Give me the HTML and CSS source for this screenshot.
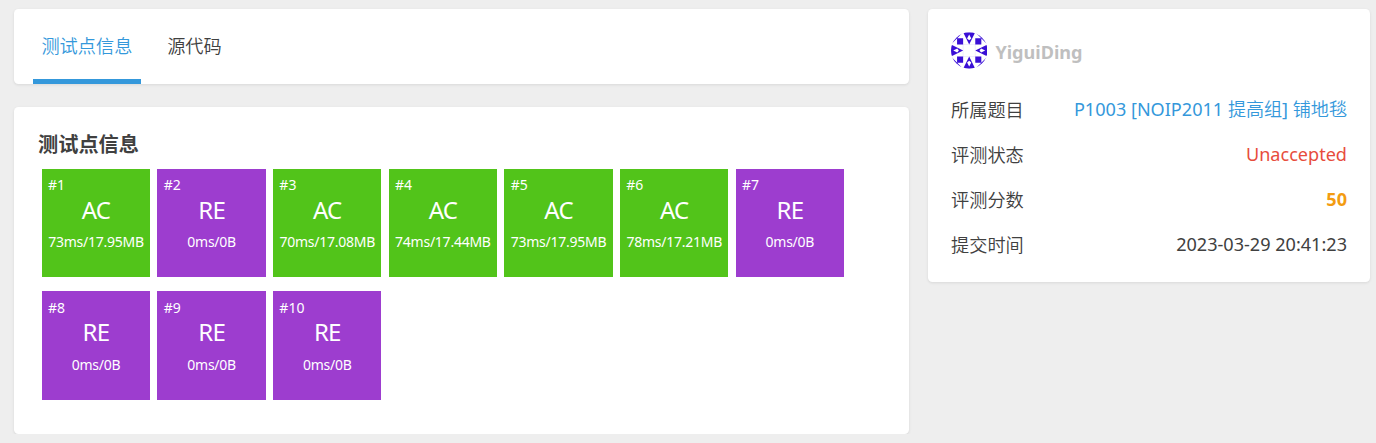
FILE: index.html
```html
<!DOCTYPE html>
<html lang="zh-CN">
<head>
<meta charset="utf-8">
<title>测试点信息</title>
<link rel="stylesheet" href="styles.css">
</head>
<body>
<main class="layout">
  <div class="main-col">
    <nav class="card tabs">
      <a class="tab active">测试点信息</a>
      <a class="tab">源代码</a>
    </nav>
    <section class="card result">
      <h3 class="title">测试点信息</h3>
      <div class="cases">
        <div class="case ac"><span class="id">#1</span><span class="status">AC</span><span class="info">73ms/17.95MB</span></div>
        <div class="case re"><span class="id">#2</span><span class="status">RE</span><span class="info">0ms/0B</span></div>
        <div class="case ac"><span class="id">#3</span><span class="status">AC</span><span class="info">70ms/17.08MB</span></div>
        <div class="case ac"><span class="id">#4</span><span class="status">AC</span><span class="info">74ms/17.44MB</span></div>
        <div class="case ac"><span class="id">#5</span><span class="status">AC</span><span class="info">73ms/17.95MB</span></div>
        <div class="case ac"><span class="id">#6</span><span class="status">AC</span><span class="info">78ms/17.21MB</span></div>
        <div class="case re"><span class="id">#7</span><span class="status">RE</span><span class="info">0ms/0B</span></div>
        <div class="case re"><span class="id">#8</span><span class="status">RE</span><span class="info">0ms/0B</span></div>
        <div class="case re"><span class="id">#9</span><span class="status">RE</span><span class="info">0ms/0B</span></div>
        <div class="case re"><span class="id">#10</span><span class="status">RE</span><span class="info">0ms/0B</span></div>
      </div>
    </section>
  </div>
  <aside class="card side">
    <div class="user">
      <svg class="avatar" viewBox="0 0 36 36">
        <defs>
          <clipPath id="round"><circle cx="18" cy="18" r="18"/></clipPath>
          <g id="quarter">
            <path d="M12 0H24L18 12ZM18 2.2L15.9 6.2L18 7.8L20.1 6.2Z" fill-rule="evenodd"/>
            <path d="M6 6H12V12H6ZM0 12L12 0H0Z"/>
          </g>
        </defs>
        <g clip-path="url(#round)" fill="#3a0fd6">
          <use href="#quarter"/>
          <use href="#quarter" transform="rotate(90 18 18)"/>
          <use href="#quarter" transform="rotate(180 18 18)"/>
          <use href="#quarter" transform="rotate(270 18 18)"/>
          <path d="M12 12H24V24H12Z" fill="none" stroke="#3a0fd6" stroke-opacity=".15" stroke-width=".5"/>
        </g>
      </svg>
      <span class="name">YiguiDing</span>
    </div>
    <div class="row"><span class="label">所属题目</span><a class="link">P1003 [NOIP2011 <span class="label">提高组</span>] <span class="label">铺地毯</span></a></div>
    <div class="row"><span class="label">评测状态</span><span class="bad">Unaccepted</span></div>
    <div class="row"><span class="label">评测分数</span><span class="score">50</span></div>
    <div class="row"><span class="label">提交时间</span><span>2023-03-29 20:41:23</span></div>
  </aside>
</main>
</body>
</html>
```
FILE: styles.css
```css
* { box-sizing: border-box; }
body {
  margin: 0;
  background: #eee;
  color: #404040;
  font: 18.08px/27px "Noto Sans", "Noto Sans CJK SC", sans-serif;
}
.layout {
  display: grid;
  grid-template-columns: 895px 442px;
  column-gap: 19px;
  align-items: start;
  padding: 9px 0 0 14px;
}
.main-col { display: grid; row-gap: 23px; }
.card {
  background: #fff;
  border-radius: 4.5px;
  box-shadow: 0 1px 3px rgba(26, 26, 26, .1);
}
.tabs {
  display: flex;
  gap: 18px;
  height: 75px;
  padding-left: 19px;
}
.tab {
  padding: 23px 8.4px 0;
  border-bottom: 5px solid transparent;
}
.tab, .label {
  font-family: "Noto Sans CJK SC DemiLight", "Noto Sans CJK SC", sans-serif;
  font-size: 18.2px;
  font-weight: 350;
}
.tab.active { color: #3498db; border-color: #3498db; }
.result { height: 327px; padding: 23px 24px; }
.title { margin: 0; font-size: 20.2px; line-height: 28px; font-weight: 700; }
.cases {
  display: grid;
  grid-template-columns: repeat(7, 108.38px);
  column-gap: 7.29px;
  row-gap: 14px;
  padding: 11px 0 0 3.75px;
}
.case {
  display: flex;
  flex-direction: column;
  height: 108.45px;
  padding: 6.2px 6px 0;
  color: #fff;
  font-size: 14px;
  line-height: 20px;
  text-align: center;
}
.ac { background: #52c41a; }
.re { background: #9d3dcf; }
.id { text-align: left; padding-left: .3px; }
.status { font-size: 24px; line-height: 30px; letter-spacing: -.8px; margin-top: -.2px; }
.info { margin-top: 7.2px; letter-spacing: -.25px; white-space: nowrap; }
.side { height: 273px; padding: 23px 23px 0; }
.user { display: flex; align-items: center; gap: 8px; height: 37px; margin-bottom: 18px; }
.avatar { width: 36.4px; height: 37px; }
.name { color: #bfbfbf; font-weight: 700; padding-top: 3px; }
.row { display: flex; justify-content: space-between; height: 45px; line-height: 45px; }
.row > .label { line-height: 44px; }
.link { color: #3498db; }
.link .label { line-height: 1; font-size: 18.08px; }
.bad { color: #e74c3c; }
.score { color: #f39c11; font-weight: 700; }
```
